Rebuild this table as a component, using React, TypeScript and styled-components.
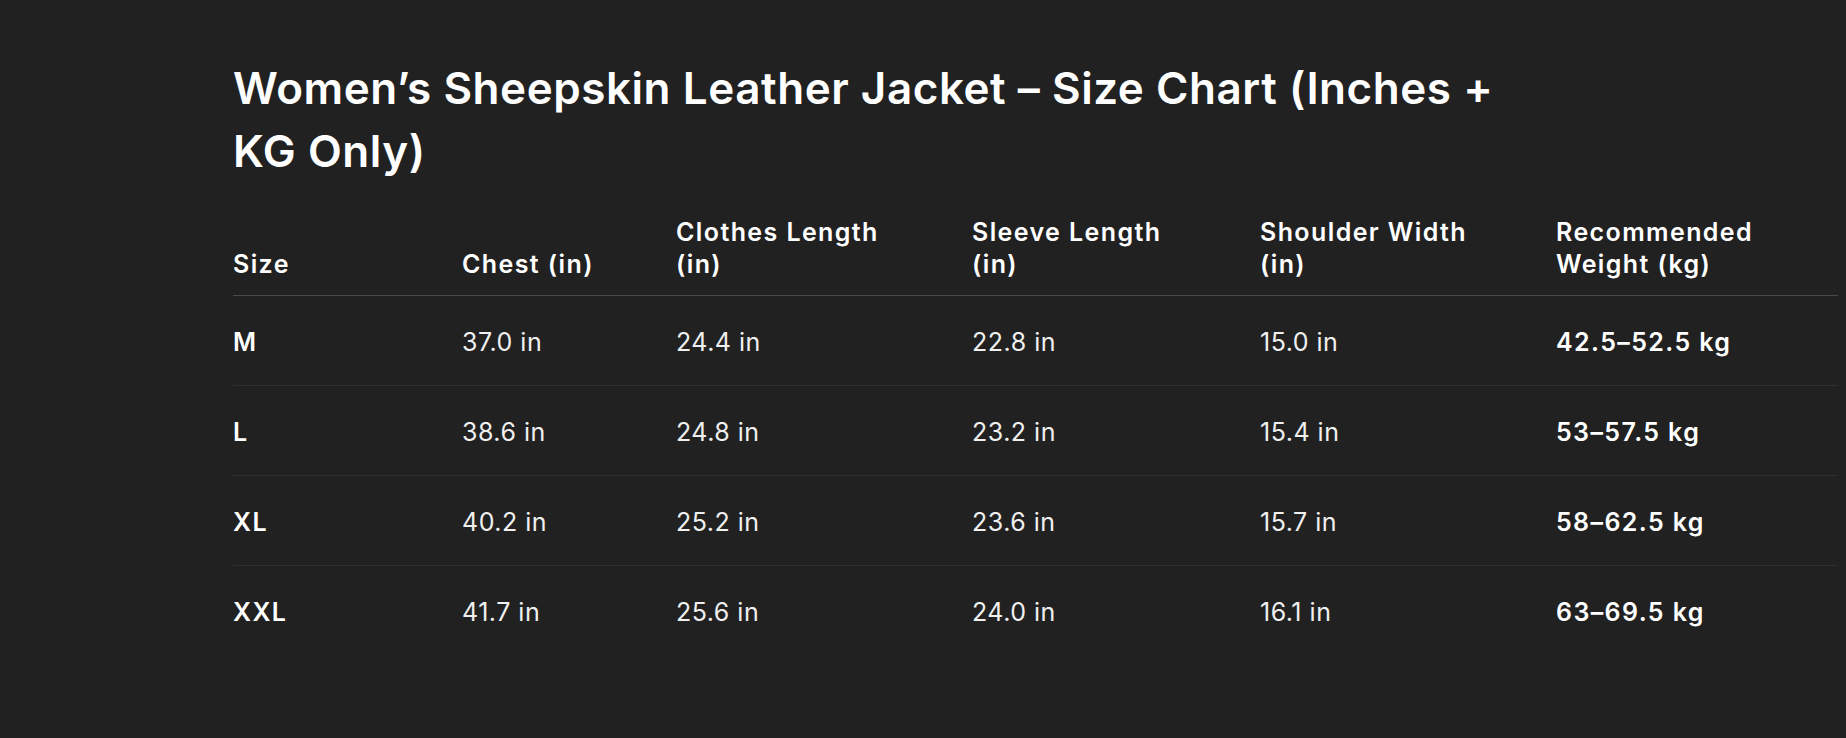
import React from "react";
import styled, { createGlobalStyle } from "styled-components";

const GlobalStyle = createGlobalStyle`
  html, body {
    margin: 0;
    padding: 0;
    background: #212121;
  }
  body {
    font-family: Inter, "Noto Sans", "Liberation Sans", sans-serif;
    color: #f5f5f5;
    -webkit-font-smoothing: antialiased;
  }
`;

const Page = styled.main`
  min-height: 738px;
  box-sizing: border-box;
  padding: 57px 8px 0 233px;
  background: #212121;
`;

const Title = styled.h2`
  margin: 0 0 31px 0;
  max-width: 1300px;
  font-size: 44px;
  line-height: 63px;
  font-weight: 600;
  color: #ffffff;
  letter-spacing: 0.55px;
`;

const Table = styled.table`
  width: 1605px;
  border-collapse: collapse;
  table-layout: fixed;
  font-size: 25px;
  line-height: 32px;
`;

const HeadCell = styled.th`
  text-align: left;
  vertical-align: bottom;
  font-weight: 600;
  letter-spacing: 1.4px;
  color: #ffffff;
  padding: 2px 60px 15px 0;
  border-bottom: 1px solid #4b4b4b;
`;

const Row = styled.tr<{ $last?: boolean }>`
  border-bottom: ${(p) => (p.$last ? "none" : "1px solid #2f2f2f")};
`;

const Cell = styled.td<{ $strong?: boolean }>`
  text-align: left;
  vertical-align: middle;
  padding: 30px 16px 27px 0;
  font-weight: ${(p) => (p.$strong ? 600 : 400)};
  letter-spacing: ${(p) => (p.$strong ? "1.4px" : "0.5px")};
  color: ${(p) => (p.$strong ? "#ffffff" : "#f0f0f0")};
  white-space: nowrap;
`;

const columns = [
  { label: "Size", width: 229 },
  { label: "Chest (in)", width: 214 },
  { label: "Clothes Length (in)", width: 296 },
  { label: "Sleeve Length (in)", width: 288 },
  { label: "Shoulder Width (in)", width: 296 },
  { label: "Recommended Weight (kg)", width: 282 },
];

const rows = [
  ["M", "37.0 in", "24.4 in", "22.8 in", "15.0 in", "42.5–52.5 kg"],
  ["L", "38.6 in", "24.8 in", "23.2 in", "15.4 in", "53–57.5 kg"],
  ["XL", "40.2 in", "25.2 in", "23.6 in", "15.7 in", "58–62.5 kg"],
  ["XXL", "41.7 in", "25.6 in", "24.0 in", "16.1 in", "63–69.5 kg"],
];

export default function App() {
  return (
    <>
      <GlobalStyle />
      <Page>
        <Title>Women’s Sheepskin Leather Jacket – Size Chart (Inches + KG Only)</Title>
        <Table>
          <colgroup>
            {columns.map((c) => (
              <col key={c.label} style={{ width: c.width }} />
            ))}
          </colgroup>
          <thead>
            <tr>
              {columns.map((c) => (
                <HeadCell key={c.label}>{c.label}</HeadCell>
              ))}
            </tr>
          </thead>
          <tbody>
            {rows.map((r, i) => (
              <Row key={r[0]} $last={i === rows.length - 1}>
                {r.map((v, j) => (
                  <Cell key={j} $strong={j === 0 || j === 5}>
                    {v}
                  </Cell>
                ))}
              </Row>
            ))}
          </tbody>
        </Table>
      </Page>
    </>
  );
}
